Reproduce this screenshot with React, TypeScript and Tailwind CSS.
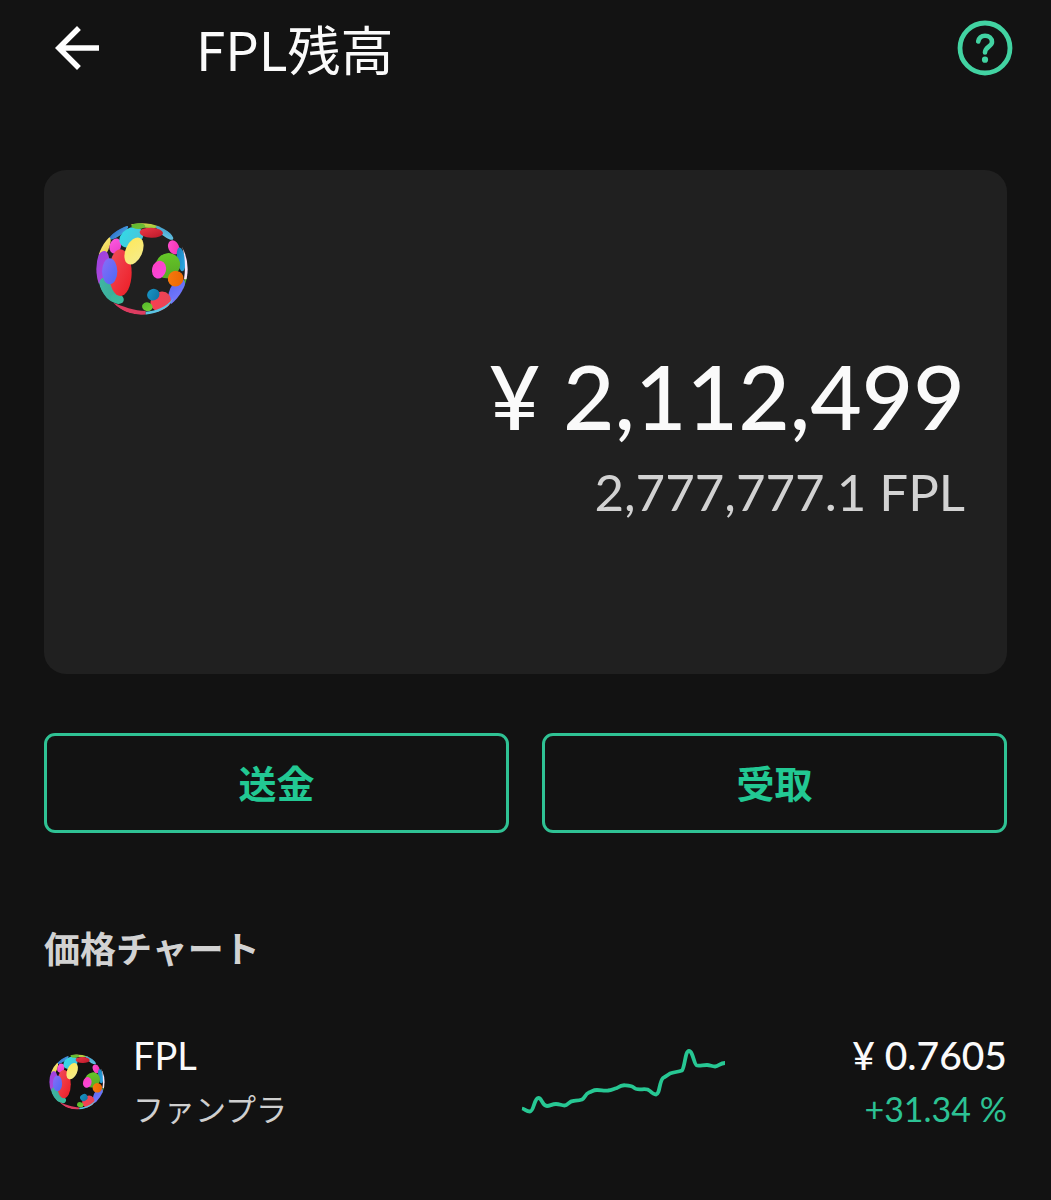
import { useId } from "react";

type Blob = { x: number; y: number; rx: number; ry: number; rot?: number; from: string; to: string };

const blobs: Blob[] = [
  { x: 102, y: 66, rx: 34, ry: 9, rot: -34, from: "#2d6fd0", to: "#4aa0dc" },
  { x: 60, y: 112, rx: 12, ry: 35, rot: 24, from: "#fff07a", to: "#e8c84a" },
  { x: 50, y: 170, rx: 22, ry: 50, rot: 12, from: "#9b3fe0", to: "#b04ad8" },
  { x: 74, y: 238, rx: 22, ry: 42, rot: -34, from: "#3fb8a8", to: "#3aa890" },
  { x: 98, y: 264, rx: 20, ry: 15, rot: 20, from: "#3fb098", to: "#37c0a0" },
  { x: 92, y: 106, rx: 17, ry: 23, rot: 20, from: "#ff5ae0", to: "#e83ec8" },
  { x: 107, y: 186, rx: 34, ry: 70, from: "#f0505c", to: "#ee1c24" },
  { x: 75, y: 182, rx: 23, ry: 39, from: "#8a6cf8", to: "#4a6af4" },
  { x: 184, y: 44, rx: 46, ry: 7, rot: 4, from: "#e8d84c", to: "#8cc83c" },
  { x: 140, y: 80, rx: 38, ry: 28, rot: -30, from: "#30dce8", to: "#4cc0d8" },
  { x: 161, y: 46, rx: 21, ry: 9, from: "#5cb82c", to: "#74c03a" },
  { x: 240, y: 66, rx: 32, ry: 10, rot: 38, from: "#3c98c8", to: "#6ccce8" },
  { x: 200, y: 66, rx: 35, ry: 15, rot: 2, from: "#f03848", to: "#b81828" },
  { x: 148, y: 121, rx: 25, ry: 43, rot: 24, from: "#ffe858", to: "#f4ec90" },
  { x: 267, y: 110, rx: 16, ry: 22, rot: -24, from: "#ff50d0", to: "#f030b0" },
  { x: 289, y: 146, rx: 12, ry: 36, rot: -8, from: "#1878b8", to: "#30b0e8" },
  { x: 303, y: 216, rx: 6, ry: 24, rot: 14, from: "#58c030", to: "#3c9c28" },
  { x: 249, y: 165, rx: 36, ry: 39, rot: 40, from: "#68cc28", to: "#54a424" },
  { x: 223, y: 177, rx: 21, ry: 27, rot: 14, from: "#ff40c0", to: "#f848e0" },
  { x: 276, y: 242, rx: 21, ry: 41, rot: 24, from: "#5868f0", to: "#7c7cff" },
  { x: 273, y: 204, rx: 24, ry: 23, rot: -40, from: "#f87c10", to: "#e86400" },
  { x: 228, y: 272, rx: 32, ry: 28, rot: -40, from: "#ff3c50", to: "#e04858" },
  { x: 206, y: 252, rx: 19, ry: 17, rot: -24, from: "#1898c8", to: "#1070a0" },
  { x: 188, y: 288, rx: 16, ry: 13, rot: 12, from: "#50b828", to: "#78d038" },
];

const rims = [
  { d: "M86 276C112 286 150 301 183 301L183 313C142 313 110 302 86 276Z", fill: "#dc3c60" },
  { d: "M183 303C215 301 245 290 266 262C250 298 215 313 183 313Z", fill: "#5cc4e4" },
  { d: "M292 106C302 138 303 172 298 206L310 206L312 140Z", fill: "#fbe6fa" },
];

function Globe({ className }: { className: string }) {
  const id = useId();
  return (
    <svg viewBox="34 36 276 278" className={className} role="img" aria-label="FPL">
      <defs>
        <clipPath id={id + "c"}>
          <circle cx="172" cy="175" r="137" />
        </clipPath>
        {blobs.map((b, i) => (
          <linearGradient key={i} id={id + i} x1="0" y1="0" x2="1" y2="1">
            <stop offset="0" stopColor={b.from} />
            <stop offset="1" stopColor={b.to} />
          </linearGradient>
        ))}
      </defs>
      <g clipPath={`url(#${id}c)`}>
        {blobs.map((b, i) => (
          <ellipse
            key={i}
            cx={b.x}
            cy={b.y}
            rx={b.rx}
            ry={b.ry}
            transform={`rotate(${b.rot ?? 0} ${b.x} ${b.y})`}
            fill={`url(#${id}${i})`}
          />
        ))}
        {rims.map((r) => (
          <path key={r.d} d={r.d} fill={r.fill} />
        ))}
      </g>
    </svg>
  );
}

function Sparkline() {
  return (
    <svg
      viewBox="0 0 230 100"
      className="h-[100px] w-[230px] shrink-0"
      fill="none"
      stroke="#27c793"
      strokeWidth="3.8"
      strokeLinejoin="round"
      aria-hidden="true"
    >
      <path d="M12 76.500C15 77 16 79.500 20 79.500C24 79.500 24 66 28.500 66C32 66 32 74 37 74C40 74 42 72 46 72C50 72 51 73.500 54.500 73.500C58 73.500 59 69 63 69C67 68.500 69 68.500 72 67.500C75 66 75 62 79 60.500C83 59 83 58 87 58C92 58 93 59 98 58.500C102 58 103 57 107 56C110 54 111 53 115 53.300C119 53.500 121 53.500 123 55C126 58 128 57.500 132 57.300C135 57 138 57 140 59C143 62 144 62.500 146 62.500C150 62 149 50 153 46C156 44 158 43 160 41.500C164 40 168 40 172 38.500C175 35 175 19 179 19C183 19 184 33 187 33.500C190 34 193 33 197 33C200 33 202 34.500 205 34.500C209 34 210 31 215 31" />
    </svg>
  );
}

const actions = ["送金", "受取"];

export default function App() {
  return (
    <div className="min-h-screen bg-[#121212] font-['Lato','Noto_Sans_CJK_JP',sans-serif] text-[#fafafa]">
      <header className="flex h-[130px] items-start justify-between bg-[#131313] pr-[38px] pl-11">
        <div className="flex h-24 items-center">
          <button type="button" aria-label="戻る" className="h-[66px] w-[66px]">
            <svg viewBox="0 0 24 24" className="h-full w-full" fill="#fff" aria-hidden="true">
              <path d="M20 11H7.830l5.590-5.590L12 4l-8 8 8 8 1.410-1.410L7.830 13H20z" />
            </svg>
          </button>
          <h1 className="ml-[86px] font-['Noto_Sans_CJK_JP',sans-serif] text-[53px] leading-[72px] font-normal">
            FPL残高
          </h1>
        </div>
        <button type="button" aria-label="ヘルプ" className="mt-5 h-14 w-14">
          <svg viewBox="0 0 56 56" className="h-full w-full" fill="none" stroke="#42d3a2" aria-hidden="true">
            <circle cx="28" cy="28" r="25" strokeWidth="4.800" />
            <path
              d="M21.200 21.500C22 17.500 24.500 15.700 28 15.700C32 15.700 35 18.300 35 22C35 26.500 28 27 28 32.500"
              strokeWidth="4.600"
              strokeLinecap="round"
            />
            <circle cx="28" cy="39.700" r="3.100" fill="#42d3a2" stroke="none" />
          </svg>
        </button>
      </header>

      <main className="px-11 pt-10">
        <section className="h-[504px] rounded-[22px] bg-[#202020] pt-[52px] pr-[42px] pl-[52px]">
          <Globe className="h-[94px] w-[92px]" />
          <p className="mt-8 text-right text-[89px] leading-[96px] font-medium">¥ 2,112,499</p>
          <p className="mt-[18px] text-right text-[51px] leading-[60px] text-[#d2d2d2]">2,777,777.1 FPL</p>
        </section>

        <div className="mt-[59px] grid grid-cols-2 gap-[33px]">
          {actions.map((label) => (
            <button
              key={label}
              type="button"
              className="h-[100px] rounded-[11px] border-3 border-[#2fc294] text-[38px] leading-none font-bold text-[#22c893]"
            >
              {label}
            </button>
          ))}
        </div>

        <h2 className="mt-[90px] text-4xl leading-[52px] font-bold text-[#d2d2d2]">価格チャート</h2>

        <div className="mt-[53px] flex items-center">
          <Globe className="ml-[5px] h-14 w-14 shrink-0" />
          <div className="ml-7 flex-1">
            <p className="text-[38px] leading-[54px]">FPL</p>
            <p className="text-[31px] leading-[54px] text-[#cfcfcf]">ファンプラ</p>
          </div>
          <Sparkline />
          <div className="w-[267px] text-right">
            <p className="text-[39px] leading-[54px] font-medium">¥ 0.7605</p>
            <p className="text-[34px] leading-[54px] text-[#2cc294]">+31.34 %</p>
          </div>
        </div>
      </main>
    </div>
  );
}
